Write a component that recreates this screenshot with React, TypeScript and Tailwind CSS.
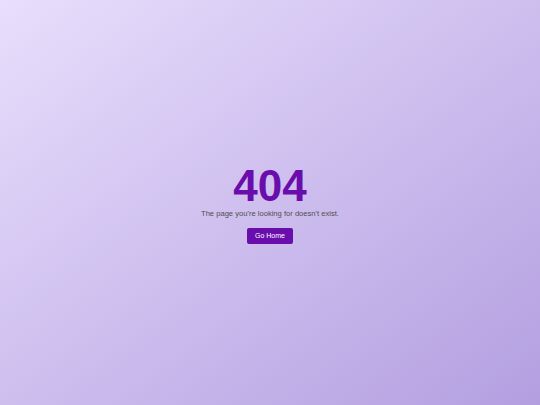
export default function App() {
  return (
    <div
      className="h-screen w-full flex flex-col items-center justify-center pt-[3px] bg-gradient-to-br from-[#e9defc] to-[#b39fe0]"
      style={{ fontFamily: '"Liberation Sans", Arial, sans-serif' }}
    >
      <h1 className="text-[44px] leading-none font-bold text-[#6a0dad]">404</h1>
      <p className="text-[7.6px] leading-[11px] text-[#4f4f4f]">
        The page you're looking for doesn't exist.
      </p>
      <button className="mt-[9px] h-[16px] px-[8px] rounded-[2px] bg-[#6a0dad] text-white text-[7px]">
        Go Home
      </button>
    </div>
  );
}
